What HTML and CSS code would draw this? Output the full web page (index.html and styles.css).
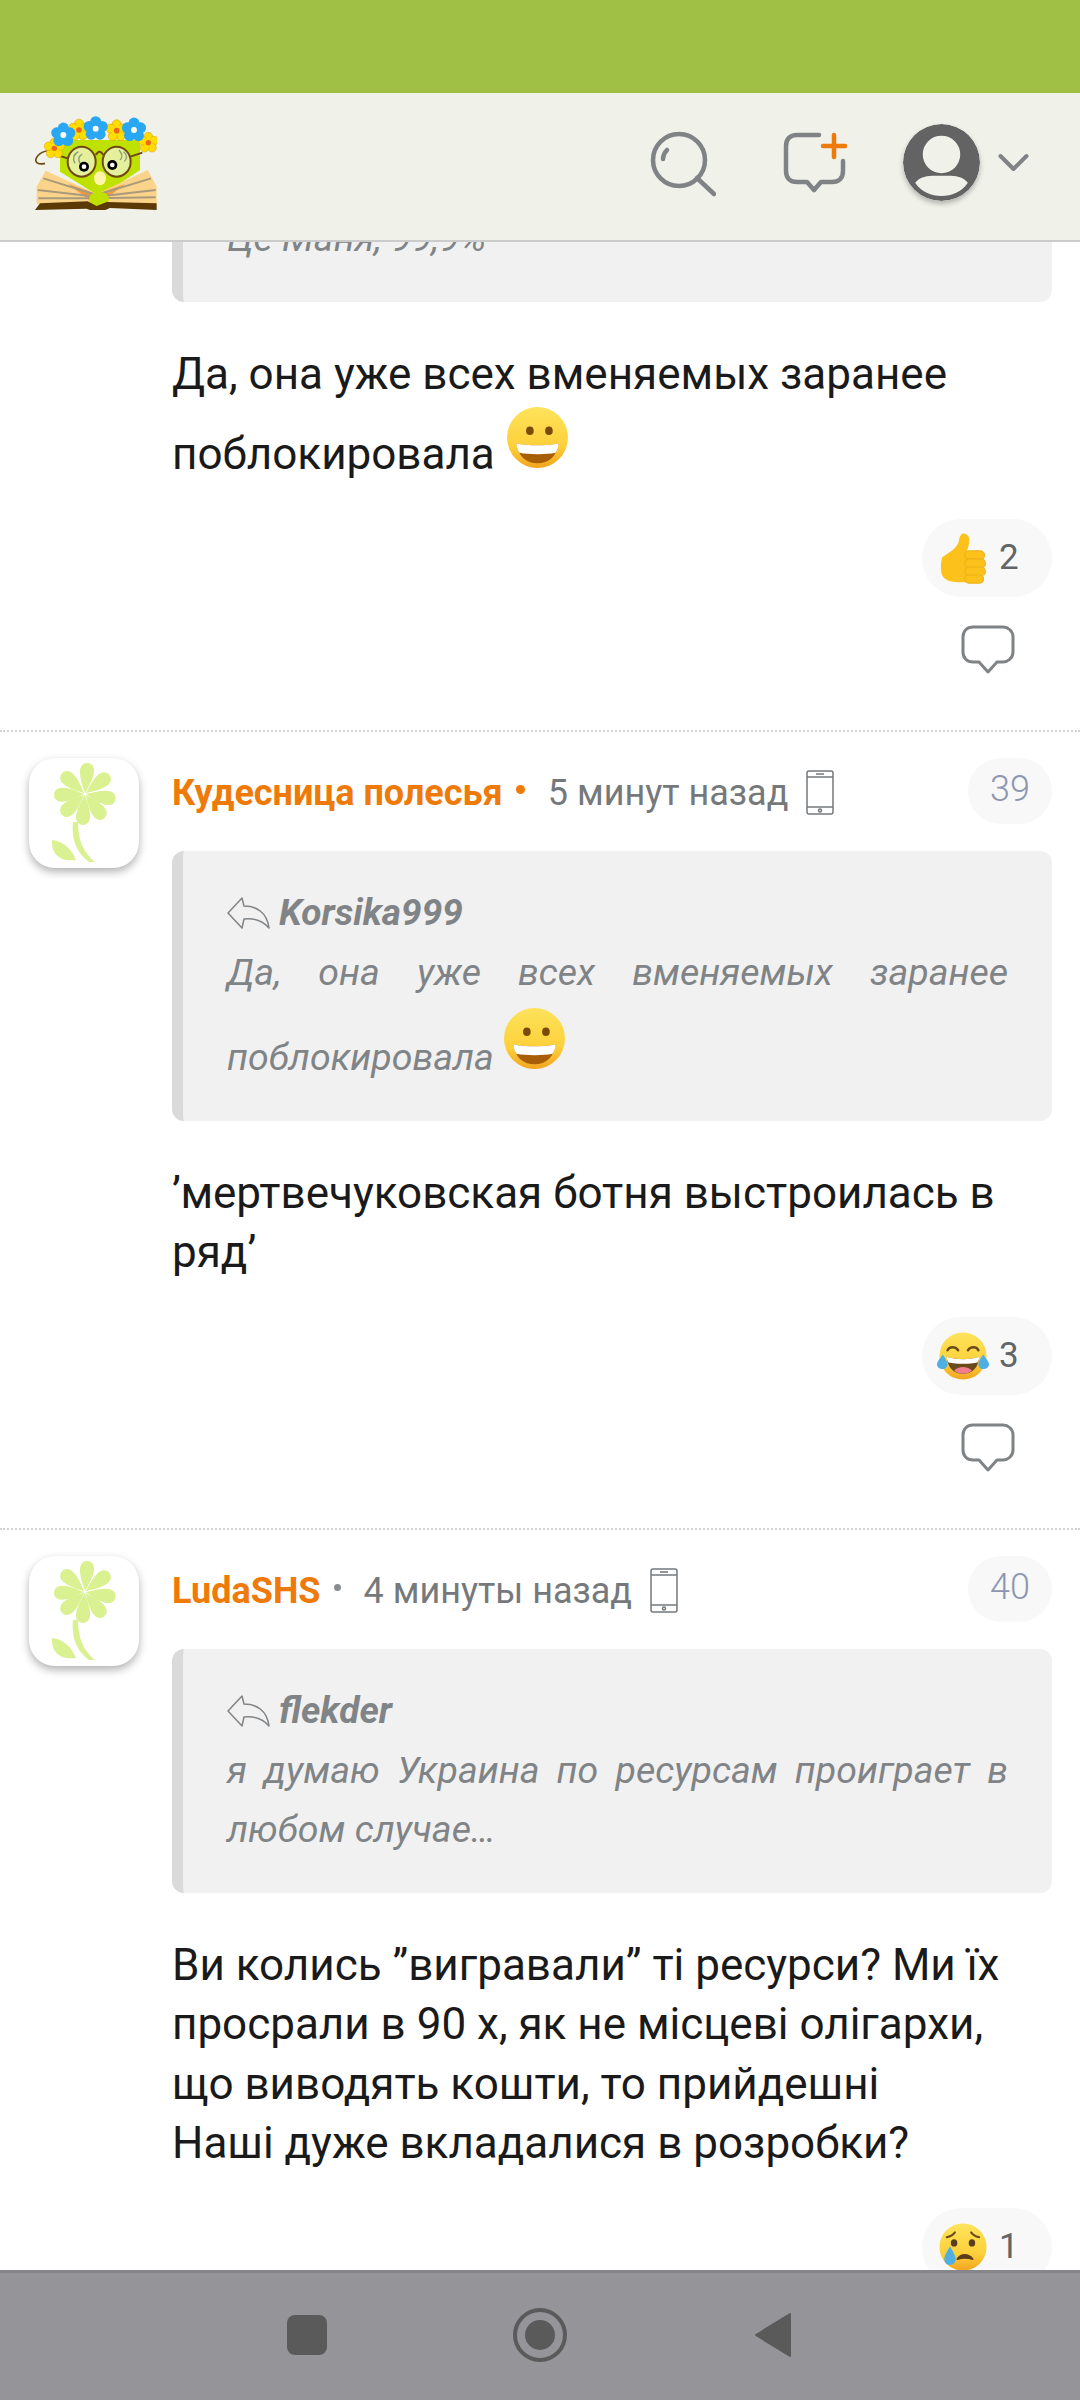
FILE: index.html
```html
<!DOCTYPE html>
<html lang="ru">
<head>
    <meta charset="UTF-8">
    <meta name="viewport" content="width=device-width, initial-scale=1.0">
    <title>Комментарии</title>
    <link rel="stylesheet" href="styles.css">
</head>
<body>
    <svg class="defs" width="0" height="0">
        <defs>
            <linearGradient id="face" x1="0" y1="0" x2="0" y2="1">
                <stop offset="0" stop-color="#fee35c"/>
                <stop offset="0.65" stop-color="#fdd03a"/>
                <stop offset="1" stop-color="#f3a41f"/>
            </linearGradient>
            <g id="flower">
                <path d="M56 35C53 28 49 20 49 13C49 8 52 5 56 5C60 5 63 8 63 13C63 20 59 28 56 35Z" transform="rotate(5 56 36)"/>
                <path d="M56 35C53 28 49 20 49 13C49 8 52 5 56 5C60 5 63 8 63 13C63 20 59 28 56 35Z" transform="rotate(52 56 36)"/>
                <path d="M56 35C53 28 49 20 49 13C49 8 52 5 56 5C60 5 63 8 63 13C63 20 59 28 56 35Z" transform="rotate(100 56 36)"/>
                <path d="M56 35C53 28 49 20 49 13C49 8 52 5 56 5C60 5 63 8 63 13C63 20 59 28 56 35Z" transform="rotate(142 56 36)"/>
                <path d="M56 35C53 28 49 20 49 13C49 8 52 5 56 5C60 5 63 8 63 13C63 20 59 28 56 35Z" transform="rotate(185 56 36)"/>
                <path d="M56 35C53 28 49 20 49 13C49 8 52 5 56 5C60 5 63 8 63 13C63 20 59 28 56 35Z" transform="rotate(228 56 36)"/>
                <path d="M56 35C53 28 49 20 49 13C49 8 52 5 56 5C60 5 63 8 63 13C63 20 59 28 56 35Z" transform="rotate(268 56 36)"/>
                <path d="M56 35C53 28 49 20 49 13C49 8 52 5 56 5C60 5 63 8 63 13C63 20 59 28 56 35Z" transform="rotate(312 56 36)"/>
                <path d="M44 64C42 82 48 95 60 104L66 104C54 94 49 82 49 64Z"/>
                <path d="M23 82C35 83 43 92 47 102C33 104 22 98 23 82Z"/>
            </g>
            <g id="bubble">
                <path d="M13 2H43C48 2 53 6 53 12V27C53 33 48 37 43 37H37L28 47L19 37H13C7 37 3 33 3 27V12C3 6 7 2 13 2Z"/>
            </g>
            <g id="phone">
                <rect x="1" y="1" width="26" height="43" rx="2"/>
                <path d="M1 7H27M1 37H27M10 4H18"/>
                <circle cx="14" cy="40.5" r="1.5"/>
            </g>
            <g id="reply">
                <path d="M1 16L15 1L17 9C29 9 40 15 42 31C35 23 26 21 17 22L15 31Z"/>
            </g>
            <g id="grin">
                <circle cx="32" cy="32" r="32" fill="url(#face)"/>
                <ellipse cx="24" cy="25" rx="4" ry="4.500" fill="#7a4a0a"/>
                <ellipse cx="44" cy="25" rx="4" ry="4.500" fill="#7a4a0a"/>
                <path d="M10 38C20 41 44 41 54 38C53 51 44 59 32 59C20 59 11 51 10 38Z" fill="#a85e08"/>
                <path d="M10 38C20 41 44 41 54 38C54 42 53 45 51 48C41 50 23 50 13 48C11 45 10 42 10 38Z" fill="#fff"/>
            </g>
            <g id="joy">
                <circle cx="32" cy="32" r="29" fill="url(#face)"/>
                <path d="M13 25C15 20 23 20 26 25M38 25C41 20 49 20 51 25" fill="none" stroke="#6b4a1a" stroke-width="3" stroke-linecap="round"/>
                <path d="M12 33C22 37 42 37 52 33C51 47 43 54 32 54C21 54 13 47 12 33Z" fill="#6b4a1a"/>
                <path d="M12 33C22 37 42 37 52 33C52 36 51 38 50 40C40 42 24 42 14 40C13 38 12 36 12 33Z" fill="#fff"/>
                <path d="M21 50C26 44 38 44 43 50C37 55 27 55 21 50Z" fill="#ef7f8c"/>
                <path d="M7 30C3 36 0 39 0 42C0 46 4 48 7 48C11 48 13 45 13 42C13 39 10 34 7 30Z" fill="#4fafe3"/>
                <path d="M57 30C61 36 64 39 64 42C64 46 60 48 57 48C53 48 51 45 51 42C51 39 54 34 57 30Z" fill="#4fafe3"/>
            </g>
            <g id="cry">
                <circle cx="32" cy="32" r="29" fill="url(#face)"/>
                <ellipse cx="21" cy="27" rx="4" ry="4.500" fill="#5a3d1b"/>
                <ellipse cx="43" cy="27" rx="4" ry="4.500" fill="#5a3d1b"/>
                <path d="M12 20C16 19 20 17 22 14M52 20C48 19 44 17 42 14" fill="none" stroke="#6b4a1a" stroke-width="2.500" stroke-linecap="round"/>
                <path d="M25 47C29 40 39 40 44 47C38 45 31 45 25 47Z" fill="#5a3d1b" stroke="#5a3d1b" stroke-width="2" stroke-linejoin="round"/>
                <path d="M16 31C12 38 9 43 9 47C9 51 12 54 16 54C20 54 23 51 23 47C23 43 20 38 16 31Z" fill="#4fafe3"/>
            </g>
            <g id="thumb">
                <path d="M24 2C28 1 32 4 32 9C32 15 30 19 29 23H44L44 56H20C12 56 3 54 1 46C0 40 0 33 2 28C8 24 16 20 20 12C21 8 21 4 24 2Z" fill="#fcc21b"/>
                <g fill="#fcc21b" stroke="#edb118" stroke-width="1.200">
                    <rect x="27" y="21" width="22" height="10" rx="5"/>
                    <rect x="27" y="30" width="23" height="10" rx="5"/>
                    <rect x="27" y="39" width="23" height="10" rx="5"/>
                    <rect x="27" y="48" width="21" height="9" rx="4.500"/>
                </g>
            </g>
            <g id="blue-flower">
                <g fill="#2aa7f2">
                    <circle cx="0" cy="-19" r="15"/>
                    <circle cx="18" cy="-6" r="15"/>
                    <circle cx="12" cy="15" r="15"/>
                    <circle cx="-12" cy="15" r="15"/>
                    <circle cx="-18" cy="-6" r="15"/>
                </g>
                <circle r="8" fill="#fff"/>
            </g>
            <g id="yellow-flower">
                <g fill="#ffdd00" stroke="#d89a00" stroke-width="1.500">
                    <circle cx="0" cy="-18" r="13"/>
                    <circle cx="17" cy="-6" r="13"/>
                    <circle cx="11" cy="15" r="13"/>
                    <circle cx="-11" cy="15" r="13"/>
                    <circle cx="-17" cy="-6" r="13"/>
                    <circle r="14" stroke="none"/>
                </g>
                <circle r="8" fill="#f0641e"/>
            </g>
        </defs>
    </svg>

    <div class="app">
        <div class="status-bar"></div>

        <header class="header">
            <svg class="logo" viewBox="30 28 366 282">
                <path d="M100 130Q40 128 32 160Q34 176 60 170" fill="none" stroke="#6e4a12" stroke-width="5"/>
                <path d="M105 100H345V190L225 270L105 195Z" fill="#bfe100"/>
                <path d="M62 192L215 262L368 190L395 240V292H35V240Z" fill="#fbd48a"/>
                <path d="M130 232L215 262L300 232L225 290H205Z" fill="#f29a3d"/>
                <path d="M215 265L55 215M215 270L38 250M215 275L40 275M215 265L378 215M215 270L392 250M215 275L392 272" stroke="#a99a7d" stroke-width="6"/>
                <ellipse cx="222" cy="277" rx="30" ry="22" fill="#bfe100"/>
                <path d="M30 310L45 290L188 284L215 298L245 286L395 290V310L255 304L218 320L185 306Z" fill="#5c3a06"/>
                <ellipse cx="170" cy="165" rx="42" ry="45" fill="#e4f09c" stroke="#6e4a12" stroke-width="6"/>
                <ellipse cx="275" cy="165" rx="42" ry="45" fill="#e4f09c" stroke="#6e4a12" stroke-width="6"/>
                <path d="M212 145Q224 125 235 145M316 150L352 138M128 155L105 148" fill="none" stroke="#6e4a12" stroke-width="6"/>
                <path d="M150 170Q138 148 160 135M165 170Q155 152 172 142M285 160Q298 148 282 130M298 165Q312 150 296 135" fill="none" stroke="#8f9a78" stroke-width="4"/>
                <circle cx="177" cy="180" r="15" fill="#000"/>
                <circle cx="262" cy="175" r="15" fill="#000"/>
                <circle cx="177" cy="180" r="7" fill="#fff"/>
                <circle cx="262" cy="175" r="7" fill="#fff"/>
                <ellipse cx="225" cy="215" rx="18" ry="21" fill="#fff4a8"/>
                <use href="#yellow-flower" transform="translate(88 125)"/>
                <use href="#yellow-flower" transform="translate(370 108)"/>
                <use href="#yellow-flower" transform="translate(162 70) scale(1.05)"/>
                <use href="#yellow-flower" transform="translate(275 72) scale(1.05)"/>
                <use href="#blue-flower" transform="translate(115 85) scale(1.1)"/>
                <use href="#blue-flower" transform="translate(212 66) scale(1.1)"/>
                <use href="#blue-flower" transform="translate(327 70) scale(1.1)"/>
            </svg>
            <div class="header-icons">
                <svg class="icon-search" viewBox="0 0 66 66">
                    <circle cx="29" cy="29" r="26" fill="none" stroke-width="4.500"/>
                    <path d="M47 47L64 63M13 28C13 25 15 21 17 19" fill="none" stroke-width="4.500" stroke-linecap="round"/>
                </svg>
                <svg class="icon-new" viewBox="0 0 64 64">
                    <path d="M36 3H14C7 3 3 7 3 14V39C3 46 7 50 14 50H24L31 58L38 50H49C56 50 60 46 60 39V29" fill="none" stroke="#7f8386" stroke-width="4.500" stroke-linecap="round" stroke-linejoin="round"/>
                    <path d="M51 3V25M40 14H62" fill="none" stroke="#ee7a0a" stroke-width="4.500" stroke-linecap="round"/>
                </svg>
                <div class="user-menu">
                    <svg class="user-pic" viewBox="0 0 76 76">
                        <circle cx="38" cy="38" r="38" fill="#636363"/>
                        <circle cx="38" cy="30" r="18.500" fill="#f0f1e9"/>
                        <path d="M12 58C18 50 28 51 38 51C48 51 58 50 64 58C58 67 48 71 38 71C28 71 18 67 12 58Z" fill="#f0f1e9"/>
                    </svg>
                    <svg class="chevron" viewBox="0 0 32 20">
                        <path d="M3 3L16 16L29 3" fill="none" stroke="#7f8386" stroke-width="4" stroke-linecap="round" stroke-linejoin="round"/>
                    </svg>
                </div>
            </div>
        </header>

        <main class="feed">
            <article class="comment comment-first">
                <div class="comment-body">
                    <div class="quote quote-cut">
                        <p class="quote-text">Це Маня, 99,9%</p>
                    </div>
                    <p class="comment-text">Да, она уже всех вменяемых заранее поблокировала <svg class="emoji-inline" viewBox="0 0 64 64"><use href="#grin"/></svg></p>
                    <div class="reactions">
                        <span class="reaction"><svg class="emoji" viewBox="0 0 50 58"><use href="#thumb"/></svg>2</span>
                    </div>
                    <div class="comment-actions">
                        <svg class="bubble" viewBox="0 0 56 50"><use href="#bubble"/></svg>
                    </div>
                </div>
            </article>

            <article class="comment">
                <div class="avatar"><svg viewBox="0 0 110 110"><use href="#flower"/></svg></div>
                <div class="comment-body">
                    <div class="meta">
                        <span class="name">Кудесница полесья</span>
                        <span class="dot dot-orange"></span>
                        <span class="time">5 минут назад</span>
                        <svg class="phone" viewBox="0 0 28 45"><use href="#phone"/></svg>
                        <span class="number">39</span>
                    </div>
                    <div class="quote">
                        <div class="quote-author"><svg class="reply" viewBox="0 0 43 32"><use href="#reply"/></svg>Korsika999</div>
                        <p class="quote-text">Да, она уже всех вменяемых заранее поблокировала <svg class="emoji-inline" viewBox="0 0 64 64"><use href="#grin"/></svg></p>
                    </div>
                    <p class="comment-text">’мертвечуковская ботня выстроилась в ряд’</p>
                    <div class="reactions">
                        <span class="reaction"><svg class="emoji" viewBox="0 0 64 64"><use href="#joy"/></svg>3</span>
                    </div>
                    <div class="comment-actions">
                        <svg class="bubble" viewBox="0 0 56 50"><use href="#bubble"/></svg>
                    </div>
                </div>
            </article>

            <article class="comment">
                <div class="avatar"><svg viewBox="0 0 110 110"><use href="#flower"/></svg></div>
                <div class="comment-body">
                    <div class="meta">
                        <span class="name">LudaSHS</span>
                        <span class="dot"></span>
                        <span class="time">4 минуты назад</span>
                        <svg class="phone" viewBox="0 0 28 45"><use href="#phone"/></svg>
                        <span class="number">40</span>
                    </div>
                    <div class="quote">
                        <div class="quote-author"><svg class="reply" viewBox="0 0 43 32"><use href="#reply"/></svg>flekder</div>
                        <p class="quote-text">я думаю Украина по ресурсам проиграет в любом случае…</p>
                    </div>
                    <p class="comment-text">Ви колись ”вигравали” ті ресурси? Ми їх просрали в 90 х, як не місцеві олігархи, що виводять кошти, то прийдешні<br>Наші дуже вкладалися в розробки?</p>
                    <div class="reactions">
                        <span class="reaction"><svg class="emoji" viewBox="0 0 64 64"><use href="#cry"/></svg>1</span>
                    </div>
                </div>
            </article>
        </main>

        <nav class="nav-bar">
            <span class="nav-square"></span>
            <svg class="nav-home" viewBox="0 0 54 54">
                <circle cx="27" cy="27" r="25" fill="none" stroke="#5a5a5a" stroke-width="4"/>
                <circle cx="27" cy="27" r="15" fill="#5a5a5a"/>
            </svg>
            <svg class="nav-back" viewBox="0 0 38 46">
                <path d="M36 2V44L2 23Z" fill="#5a5a5a" stroke="#5a5a5a" stroke-width="2" stroke-linejoin="round"/>
            </svg>
        </nav>
    </div>
</body>
</html>
```

FILE: styles.css
```css
* {
    box-sizing: border-box;
}
body {
    margin: 0;
    background: white;
    font-family: Roboto, "Noto Sans", sans-serif;
}
p {
    margin: 0;
}
.defs {
    position: absolute;
}
.app {
    height: 2400px;
    display: flex;
    flex-direction: column;
    overflow: hidden;
}
.status-bar {
    height: 93px;
    background: #a0c045;
    flex: none;
}
.header {
    height: 149px;
    flex: none;
    background: #f0f1e9;
    border-bottom: 2px solid #cbcbcb;
    display: flex;
    align-items: center;
    justify-content: space-between;
    padding: 0 50px 8px 35px;
}
.logo {
    width: 122px;
    height: 94px;
}
.header-icons {
    display: flex;
    align-items: center;
}
.icon-search {
    width: 66px;
    height: 66px;
    stroke: #7f8386;
    margin: 3px 67px 0 0;
}
.icon-new {
    width: 64px;
    height: 64px;
    margin: 3px 56px 0 0;
}
.user-menu {
    display: flex;
    align-items: center;
    gap: 17px;
}
.user-pic {
    width: 77px;
    height: 77px;
    border-radius: 50%;
    box-shadow: 0 3px 5px rgba(0,0,0,0.25);
}
.chevron {
    width: 33px;
    height: 20px;
}

.feed {
    flex: 1;
    min-height: 0;
    overflow: hidden;
}
.comment {
    display: flex;
    padding: 26px 28px 55px 29px;
    border-bottom: 2px dotted #d4d4d4;
}
.comment-first {
    margin-top: -33px;
    padding-top: 0;
    padding-left: 172px;
}
.comment-body {
    flex: 1;
    min-width: 0;
}
.avatar {
    flex: none;
    width: 110px;
    height: 110px;
    margin-right: 33px;
    border-radius: 26px;
    background: white;
    box-shadow: 0 4px 8px rgba(0,0,0,0.3);
}
.avatar svg {
    width: 100%;
    height: 100%;
    fill: #d9f190;
    display: block;
}
.meta {
    height: 66px;
    display: flex;
    align-items: center;
    font-size: 36px;
}
.name {
    color: #ee7a0a;
    font-weight: bold;
    margin-top: 4px;
}
.dot {
    width: 7px;
    height: 7px;
    border-radius: 50%;
    background: #8a8d90;
    margin: 0 23px 2px 13px;
}
.dot-orange {
    width: 9px;
    height: 9px;
    background: #ee7a0a;
}
.time {
    color: #75797c;
    margin-top: 4px;
}
.phone {
    width: 28px;
    height: 45px;
    margin: 4px 0 0 18px;
    fill: none;
    stroke: #75797c;
    stroke-width: 1.5;
}
.number {
    margin-left: auto;
    width: 84px;
    height: 66px;
    border-radius: 33px;
    background: #f8f8f8;
    color: #8d97b0;
    font-weight: 300;
    display: flex;
    align-items: center;
    justify-content: center;
    padding-bottom: 4px;
}
.quote {
    margin-top: 27px;
    background: #f1f1f1;
    border-left: 11px solid #dadada;
    border-radius: 12px;
    padding: 32px 44px 33px;
    font-style: italic;
    color: #808487;
    font-size: 37.500px;
}
.quote-cut {
    margin-top: 0;
    padding-top: 0;
}
.quote-author {
    font-size: 37px;
    font-weight: bold;
    height: 60px;
    display: flex;
    align-items: center;
}
.reply {
    width: 43px;
    height: 32px;
    margin-right: 9px;
    fill: none;
    stroke: #808487;
    stroke-width: 1.500;
    stroke-linejoin: round;
}
.quote-text {
    line-height: 59.500px;
    text-align: justify;
}
.emoji-inline {
    width: 61px;
    height: 61px;
    margin: 3px 0 0 1px;
    vertical-align: 1px;
}
.quote .emoji-inline {
    margin-top: 6px;
}
.comment-text {
    margin-top: 43px;
    font-size: 44px;
    line-height: 59.500px;
    color: #1a1a1a;
}
.reactions {
    margin-top: 34px;
    display: flex;
    justify-content: flex-end;
}
.reaction {
    width: 130px;
    height: 78px;
    border-radius: 39px;
    background: #f8f8f8;
    color: #616568;
    font-size: 35px;
    display: flex;
    align-items: center;
    padding-left: 15px;
    gap: 10px;
}
.reaction .emoji {
    width: 52px;
    height: 52px;
}
.comment-actions {
    margin-top: 28px;
    padding-right: 36px;
    display: flex;
    justify-content: flex-end;
}
.bubble {
    display: block;
    width: 56px;
    height: 50px;
    fill: none;
    stroke: #7f8386;
    stroke-width: 3;
    stroke-linejoin: round;
}

.nav-bar {
    height: 130px;
    flex: none;
    background: #959499;
    border-top: 3px solid #87868b;
    display: flex;
    align-items: center;
    padding: 0 0 3px 287px;
}
.nav-square {
    width: 40px;
    height: 40px;
    border-radius: 8px;
    background: #5a5a5a;
    margin-right: 186px;
}
.nav-home {
    width: 54px;
    height: 54px;
    margin-right: 187px;
}
.nav-back {
    width: 38px;
    height: 46px;
}
```
